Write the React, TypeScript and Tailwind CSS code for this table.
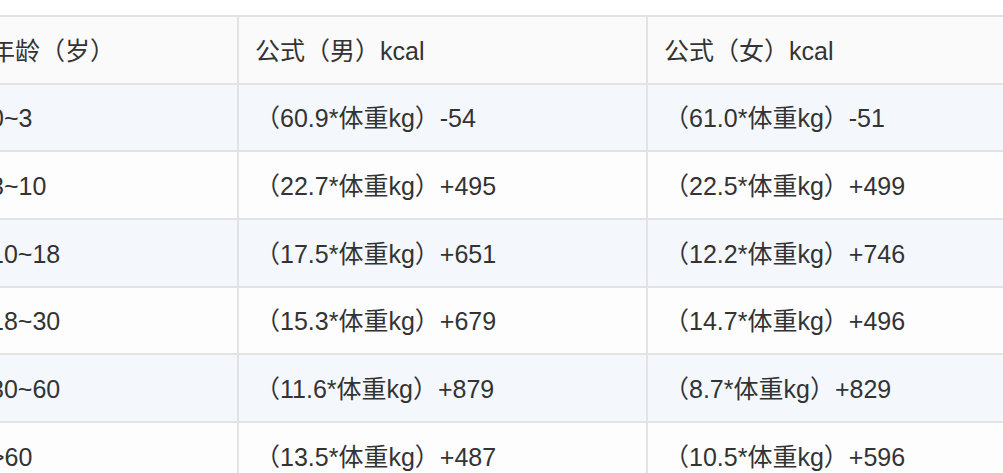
import React from "react";

const data: [string, string, string][] = [
  ["0~3", "（60.9*体重kg）-54", "（61.0*体重kg）-51"],
  ["3~10", "（22.7*体重kg）+495", "（22.5*体重kg）+499"],
  ["10~18", "（17.5*体重kg）+651", "（12.2*体重kg）+746"],
  ["18~30", "（15.3*体重kg）+679", "（14.7*体重kg）+496"],
  ["30~60", "（11.6*体重kg）+879", "（8.7*体重kg）+829"],
  [">60", "（13.5*体重kg）+487", "（10.5*体重kg）+596"],
];

function Row({
  cells,
  bg,
}: {
  cells: [string, string, string];
  bg: string;
}) {
  return (
    <div
      className={`grid grid-cols-[266px_409px_409px] h-[67.67px] border-t-2 border-[#e3e3e3] ${bg}`}
    >
      <div className="flex items-center pl-[19px] pt-[3px] whitespace-nowrap">{cells[0]}</div>
      <div className="flex items-center pl-[16px] pt-[3px] border-l-2 border-[#e3e3e3] whitespace-nowrap">
        {cells[1]}
      </div>
      <div className="flex items-center pl-[16px] pt-[3px] border-l-2 border-[#e3e3e3] whitespace-nowrap">
        {cells[2]}
      </div>
    </div>
  );
}

export default function App() {
  return (
    <div
      className="w-[1003px] h-[473px] overflow-hidden bg-white pt-[15px] text-[25px] text-[#333333]"
      style={{ fontFamily: '"Liberation Sans", "Noto Sans CJK SC", sans-serif' }}
    >
      <div className="ml-[-29px] w-[1084px]">
        <Row cells={["年龄（岁）", "公式（男）kcal", "公式（女）kcal"]} bg="bg-[#fafafa]" />
        {data.map((r, i) => (
          <Row
            key={i}
            cells={r}
            bg={i % 2 === 0 ? "bg-[#f4f8fc]" : "bg-[#fdfdfd]"}
          />
        ))}
      </div>
    </div>
  );
}
